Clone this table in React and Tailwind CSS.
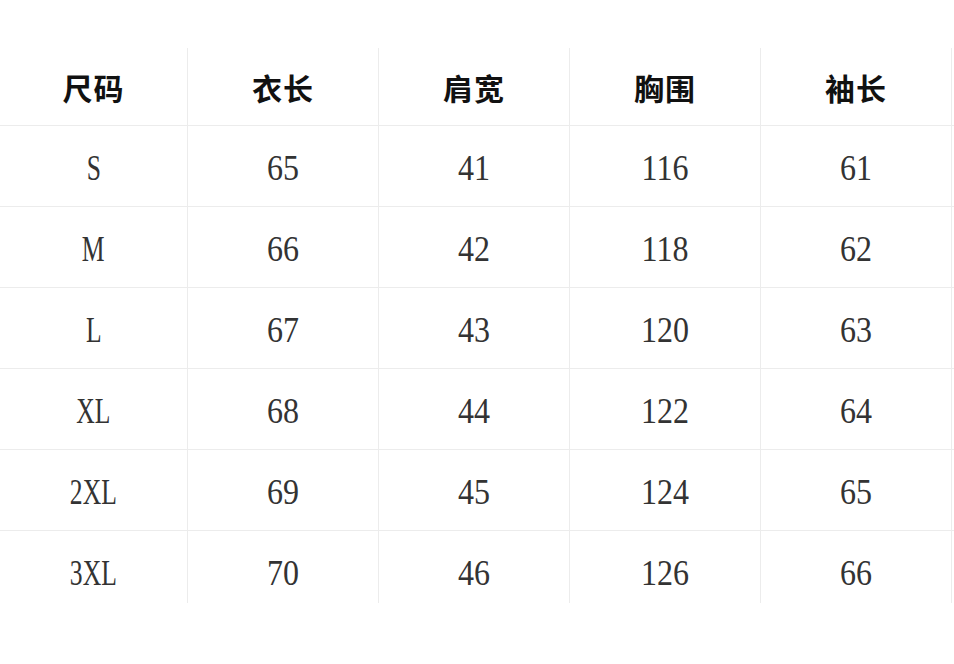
import React from "react";

const headers = ["尺码", "衣长", "肩宽", "胸围", "袖长"];
const rows = [
  ["S", "65", "41", "116", "61"],
  ["M", "66", "42", "118", "62"],
  ["L", "67", "43", "120", "63"],
  ["XL", "68", "44", "122", "64"],
  ["2XL", "69", "45", "124", "65"],
  ["3XL", "70", "46", "126", "66"],
];

const widths = ["w-[188px]", "w-[191px]", "w-[191px]", "w-[191px]", "w-[191px]"];

export default function App() {
  return (
    <div className="w-[954px] h-[664px] bg-white pt-[48px] overflow-hidden">
      <div className="flex h-[78px] border-b border-[#ececec]">
        {headers.map((h, i) => (
          <div
            key={h}
            className={`${widths[i]} shrink-0 border-r border-[#ececec] flex items-center justify-center`}
          >
            <span
              className="text-[30px] font-bold leading-none text-[#111111] tracking-[1px]"
              style={{ fontFamily: '"Noto Sans CJK SC", "Noto Sans", sans-serif' }}
            >
              {h}
            </span>
          </div>
        ))}
      </div>
      {rows.map((r, ri) => (
        <div
          key={ri}
          className={
            ri === rows.length - 1
              ? "flex h-[72px]"
              : "flex h-[81px] border-b border-[#ececec]"
          }
        >
          {r.map((c, ci) => (
            <div
              key={ci}
              className={`${widths[ci]} shrink-0 border-r border-[#ececec] flex items-center justify-center`}
            >
              <span
                className={`inline-block text-[32px] leading-none text-[#333333] scale-y-[1.1] ${ci === 0 ? "scale-x-[0.8]" : ""} ${ri === rows.length - 1 ? "translate-y-[6px]" : "translate-y-[2px]"}`}
                style={{ fontFamily: '"Liberation Serif", serif' }}
              >
                {c}
              </span>
            </div>
          ))}
        </div>
      ))}
    </div>
  );
}
